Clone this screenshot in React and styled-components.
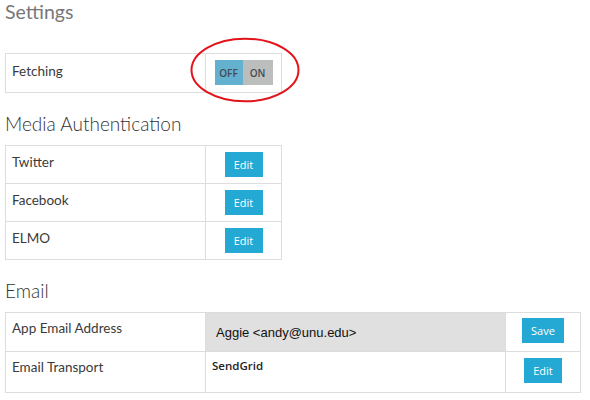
import React, { useState } from "react";
import styled, { createGlobalStyle } from "styled-components";

const GlobalStyle = createGlobalStyle`
  body {
    margin: 0;
    background: #fff;
    font-family: Lato, "Open Sans", sans-serif;
  }
  *, *::before, *::after {
    box-sizing: border-box;
  }
`;

const Page = styled.div`
  padding: 0 5px;
  width: 590px;
`;

const Title = styled.h1`
  margin: 0;
  font-size: 19.5px;
  line-height: 24px;
  font-weight: 400;
  color: #777;
`;

const Heading = styled.h2`
  margin: 20px 0 0;
  font-size: 19px;
  line-height: 22px;
  font-weight: 300;
  color: #333;
`;

const Table = styled.div`
  margin-top: ${(p) => p.$top}px;
  display: inline-flex;
  flex-direction: column;
  border-top: 1px solid #ddd;
  border-left: 1px solid #ddd;
  vertical-align: top;
`;

const Row = styled.div`
  display: grid;
  grid-template-columns: ${(p) => p.$cols};
  height: ${(p) => p.$h}px;
  border-bottom: 1px solid #ddd;
`;

const Cell = styled.div`
  border-right: 1px solid #ddd;
  padding: ${(p) => p.$pt ?? 6}px 6px 0;
  font-size: 13.5px;
  line-height: 20px;
  color: #3a3a3a;
  text-align: ${(p) => (p.$center ? "center" : "left")};
`;

const InputCell = styled.div`
  border-right: 1px solid #ddd;
  background: #e0e0e0;
  padding: 12px 10px 0;
  font-family: "Segoe UI", "Liberation Sans", sans-serif;
  font-size: 13px;
  line-height: 15px;
  color: #111;
`;

const ValueCell = styled.div`
  border-right: 1px solid #ddd;
  padding: 6px 6px 0;
  font-family: "Open Sans", sans-serif;
  font-weight: 600;
  font-size: 11.5px;
  line-height: 16px;
  color: #222;
`;

const Button = styled.button`
  width: ${(p) => p.$w}px;
  height: 25px;
  padding: 0;
  border: none;
  border-radius: 0;
  background: #24a9d4;
  color: #fff;
  font-family: "Segoe UI", "Open Sans", sans-serif;
  font-size: 11px;
  line-height: 25px;
  cursor: pointer;
`;

const ToggleWrap = styled.div`
  position: relative;
  display: inline-flex;
  width: 58px;
  height: 25px;
  vertical-align: top;
`;

const ToggleSide = styled.span`
  width: ${(p) => p.$w}px;
  display: flex;
  align-items: center;
  justify-content: center;
  background: ${(p) => (p.$active ? "#64b0cf" : "#bcbebe")};
  font-family: "Open Sans", sans-serif;
  font-weight: 600;
  font-size: 10px;
  color: #454a50;
  cursor: pointer;
`;

const Circle = styled.svg`
  position: absolute;
  left: -25px;
  top: -23px;
  pointer-events: none;
  overflow: visible;
`;

const Toggle = () => {
  const [on, setOn] = useState(false);
  return (
    <ToggleWrap>
      <ToggleSide $w={28} $active={!on} onClick={() => setOn(false)}>OFF</ToggleSide>
      <ToggleSide $w={30} $active={on} onClick={() => setOn(true)}>ON</ToggleSide>
      {/* red hand-drawn marker round the switch */}
      <Circle width="110" height="66" viewBox="0 0 110 66">
        <ellipse cx="55" cy="33" rx="53.5" ry="31.3" fill="none" stroke="#e3131b" strokeWidth="2" />
      </Circle>
    </ToggleWrap>
  );
};

const media = ["Twitter", "Facebook", "ELMO"];

const App = () => {
  return (
    <Page>
      <GlobalStyle />
      <Title>Settings</Title>
      <Table $top={29}>
        <Row $cols="200px 76px" $h={39}>
          <Cell $pt={7}>Fetching</Cell>
          <Cell $center>
            <Toggle />
          </Cell>
        </Row>
      </Table>

      <Heading>Media Authentication</Heading>
      <Table $top={10}>
        {media.map((m) => (
          <Row key={m} $cols="200px 76px" $h={38}>
            <Cell>{m}</Cell>
            <Cell $center>
              <Button $w={38}>Edit</Button>
            </Cell>
          </Row>
        ))}
      </Table>

      <Heading>Email</Heading>
      <Table $top={10}>
        <Row $cols="200px 300px 75px" $h={39}>
          <Cell $pt={5}>App Email Address</Cell>
          <InputCell>Aggie &lt;andy@unu.edu&gt;</InputCell>
          <Cell $center $pt={5}>
            <Button $w={42}>Save</Button>
          </Cell>
        </Row>
        <Row $cols="200px 300px 75px" $h={41}>
          <Cell $pt={5}>Email Transport</Cell>
          <ValueCell>SendGrid</ValueCell>
          <Cell $center>
            <Button $w={38}>Edit</Button>
          </Cell>
        </Row>
      </Table>
    </Page>
  );
};

export default App;
